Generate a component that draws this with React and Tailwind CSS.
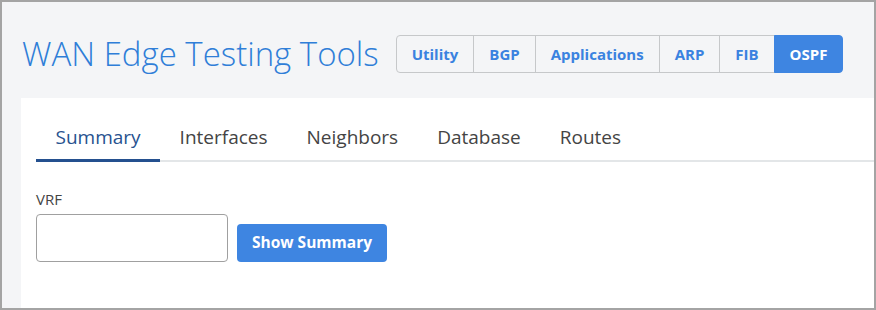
import { useState } from "react";

const TOOLS = ["Utility", "BGP", "Applications", "ARP", "FIB", "OSPF"];
const TABS = ["Summary", "Interfaces", "Neighbors", "Database", "Routes"];

export default function App() {
  const [tool, setTool] = useState("OSPF");
  const [tab, setTab] = useState("Summary");
  const [vrf, setVrf] = useState("");

  return (
    <div className="w-[876px] h-[310px] overflow-hidden border-2 border-[#a4a4a4] bg-[#f4f5f7] font-['Open_Sans',sans-serif] flex flex-col">
      {/* Header */}
      <div className="flex items-center pl-5 pt-[33px] pb-[25px]">
        <h1 className="text-[33px] leading-[38px] font-light text-[#2f7ed8] mr-[17px]">
          WAN Edge Testing Tools
        </h1>
        <div className="flex h-[38px]">
          {TOOLS.map((t, i) => (
            <button
              key={t}
              onClick={() => setTool(t)}
              className={`px-[15px] text-[15px] font-bold border ${
                i > 0 ? "-ml-px" : ""
              } ${i === 0 ? "rounded-l-[4px]" : ""} ${
                i === TOOLS.length - 1 ? "rounded-r-[4px]" : ""
              } ${
                tool === t
                  ? "bg-[#3e85e1] border-[#3e85e1] text-white relative"
                  : "bg-[#f4f5f7] border-[#c6c8ca] text-[#3a82e0]"
              }`}
            >
              {t}
            </button>
          ))}
        </div>
      </div>

      {/* Panel */}
      <div className="flex-1 ml-[19px] bg-white pl-[15px] pt-[27px]">
        <div className="flex border-b-2 border-[#e3e6e8]">
          {TABS.map((t) => (
            <button
              key={t}
              onClick={() => setTab(t)}
              className={`px-[19.5px] pb-[10px] text-[19px] leading-[24px] -mb-[2px] border-b-[3px] ${
                tab === t
                  ? "border-[#24508f] text-[#27528f]"
                  : "border-transparent text-[#444444]"
              }`}
            >
              {t}
            </button>
          ))}
        </div>

        <div className="pt-[27px]">
          <label className="block text-[15px] leading-[20px] text-[#444444] mb-[5px]">VRF</label>
          <div className="flex items-end gap-[9px]">
            <input
              value={vrf}
              onChange={(e) => setVrf(e.target.value)}
              className="w-[192px] h-[48px] border border-[#a0a0a0] rounded-[4px] px-3 text-[14px] outline-none"
            />
            <button className="w-[150px] h-[38px] bg-[#3e85e1] text-white text-[15.5px] font-bold rounded-[4px]">
              Show Summary
            </button>
          </div>
        </div>
      </div>
    </div>
  );
}
